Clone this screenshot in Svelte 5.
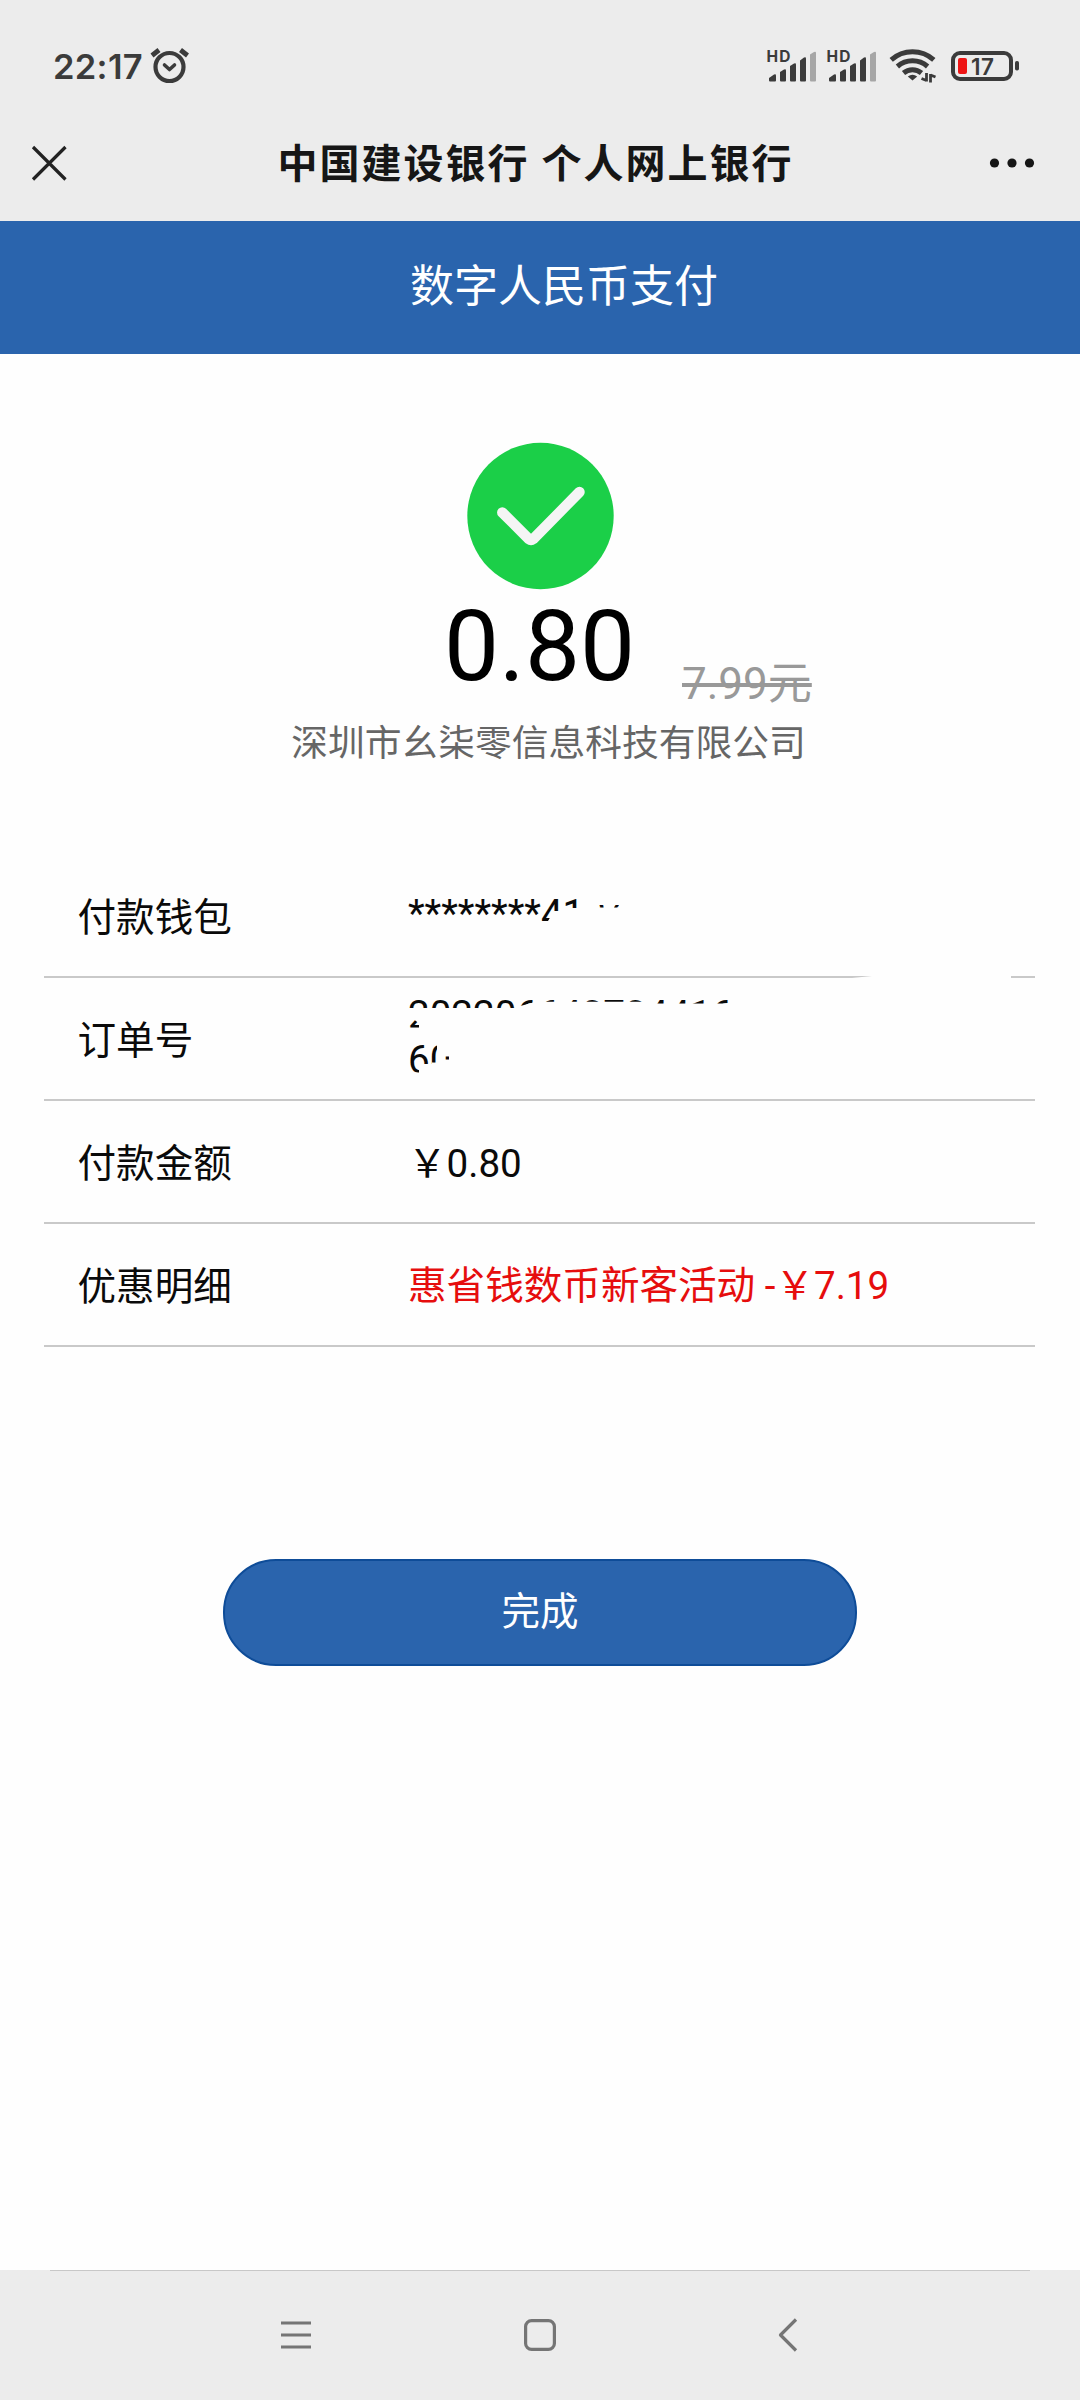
<script>
  const rows = [
    { label: '付款钱包', value: '********4104', kind: 'wallet' },
    { label: '订单号', value: '202206640704416', rest: '60', kind: 'order' },
    { label: '付款金额', value: '\uFFE50.80', kind: 'amount' },
    { label: '优惠明细', value: '惠省钱数币新客活动 -\uFFE57.19', kind: 'discount' }
  ];
</script>

{#snippet signal()}
  <svg class="signal" width="52" height="36" viewBox="0 0 52 36">
    <text x="-0.500" y="15" class="hd" textLength="24">HD</text>
    <g fill="#3b3b3b">
      <path d="M2 31 7 27.500Q9 26.500 9 28.500V33.500q0 1-1 1H3q-1 0-1-1Z" />
      <path d="M13 25 17 22.500Q19 21.500 19 23.500V33.500q0 1-1 1H14q-1 0-1-1Z" />
      <path d="M23 19 27 16.500Q29 15.500 29 17.500V33.500q0 1-1 1H24q-1 0-1-1Z" />
      <path d="M33 13.500 37 10.500Q39 9.500 39 11.500V33.500q0 1-1 1H34q-1 0-1-1Z" />
    </g>
    <path fill="#a6a6a6" d="M43 7.500 47 5Q49 4 49 6V33.500q0 1-1 1H44q-1 0-1-1Z" />
  </svg>
{/snippet}

<div class="screen">
  <div class="status">
    <span class="time">22:17</span>
    <svg class="alarm" width="40" height="38" viewBox="0 0 40 38" fill="none" stroke="#3b3b3b" stroke-width="4.200" stroke-linecap="round" stroke-linejoin="round">
      <circle cx="20.500" cy="21" r="14" />
      <path d="m15.500 19 5 4.500 5-4.500" stroke-width="3.600" />
      <path d="M3 9.500 10 4M31.500 4 38.500 9.500" stroke-linecap="butt" stroke-width="4.800" />
    </svg>
    <div class="indicators">
      {@render signal()}
      {@render signal()}
      <svg class="wifi" width="48" height="36" viewBox="0 0 48 36" fill="none" stroke="#3b3b3b" stroke-width="5">
        <path d="M2.200 12.800a32 32 0 0 1 42.600 0" />
        <path d="M8.400 19.500a23 23 0 0 1 30.200 0" />
        <path d="M14.500 26a14 14 0 0 1 18 0" />
        <path d="M23.500 33.500 18.800 29.500q4.700-3.400 9.400 0Z" fill="#3b3b3b" stroke="none" />
        <path d="M37.500 26v8.500M32.500 31.500l5 2M41.500 35.500V27M46.500 30l-5-2" stroke-width="2.800" />
      </svg>
      <svg class="battery" width="70" height="32" viewBox="0 0 70 32">
        <rect x="3" y="3" width="58" height="26" rx="7" fill="none" stroke="#3b3b3b" stroke-width="4" />
        <rect x="8" y="8" width="9" height="16" rx="2" fill="#ee1515" />
        <rect x="65" y="11" width="4" height="9.500" rx="1.800" fill="#3b3b3b" />
        <text x="21" y="25" class="level" textLength="23">17</text>
      </svg>
    </div>
  </div>

  <header class="titlebar">
    <svg width="36" height="36" viewBox="0 0 36 36" fill="none" stroke="#222" stroke-width="3.200">
      <path d="M2 2 34.500 34.500M34.500 2 2 34.500" />
    </svg>
    <h1>中国建设银行 个人网上银行</h1>
    <svg width="46" height="12" viewBox="0 0 46 12" fill="#161616">
      <circle cx="4.500" cy="6" r="4.600" /><circle cx="22" cy="6" r="4.600" /><circle cx="39.500" cy="6" r="4.600" />
    </svg>
  </header>

  <div class="banner">数字人民币支付</div>

  <main>
    <svg class="success" width="147" height="147" viewBox="0 0 147 147">
      <circle cx="73.500" cy="73" r="73.200" fill="#1bcf48" />
      <path d="M35.300 69.500 61.800 96Q64 97.600 66.300 96L112.500 49" fill="none" stroke="#f5f5f5" stroke-width="10.500" stroke-linecap="round" stroke-linejoin="round" />
    </svg>

    <div class="price">
      <span class="paid">0.80</span>
      <span class="original">7.99元</span>
    </div>
    <p class="merchant">深圳市幺柒零信息科技有限公司</p>

    <dl>
      {#each rows as row}
        <div class="row {row.kind}">
          <dt>{row.label}</dt>
          <dd>{row.value}{#if row.rest}<br />{row.rest}{/if}</dd>
        </div>
      {/each}
    </dl>

    <button>完成</button>
  </main>

  <nav>
    <svg width="32" height="34" viewBox="0 0 32 34" stroke="#757575" stroke-width="3.200">
      <path d="M1 5H31M1 17H31M1 29H31" />
    </svg>
    <svg width="34" height="34" viewBox="0 0 34 34" fill="none" stroke="#757575" stroke-width="3.200">
      <rect x="2.600" y="2.600" width="28.800" height="28.800" rx="6" />
    </svg>
    <svg width="22" height="36" viewBox="0 0 22 36" fill="none" stroke="#757575" stroke-width="3.200" stroke-linejoin="round">
      <path d="M19 2.500 3.500 18 19 33.500" />
    </svg>
  </nav>
</div>

<style>
  :global(body) {
    margin: 0;
    background: #fefefe;
  }
  .screen {
    width: 1080px;
    height: 2400px;
    display: flex;
    flex-direction: column;
    background: #fefefe;
    color: #0a0a0a;
    font-family: Roboto, 'Noto Sans CJK SC', sans-serif;
    overflow: hidden;
  }
  svg {
    display: block;
    flex: none;
    overflow: visible;
  }
  .status {
    height: 104px;
    box-sizing: border-box;
    padding: 47px 60px 0 53px;
    display: flex;
    align-items: flex-start;
    background: #ececec;
  }
  .time {
    width: 96px;
    height: 38px;
    font: 600 34.5px/39px Inter, sans-serif;
    letter-spacing: 0.3px;
    color: #3b3b3b;
  }
  .alarm {
    margin-top: -1px;
  }
  .indicators {
    margin-left: auto;
    display: flex;
  }
  .signal {
    margin-right: 8px;
  }
  .hd {
    font: 700 15.5px Inter, sans-serif;
    fill: #3b3b3b;
  }
  .wifi {
    margin-left: 2px;
  }
  .battery {
    margin: 3px 0 0 13px;
  }
  .level {
    font: 600 22.5px Inter, sans-serif;
    fill: #3b3b3b;
  }
  .titlebar {
    height: 117px;
    box-sizing: border-box;
    padding: 0 44px 0 31px;
    display: flex;
    align-items: center;
    justify-content: space-between;
    background: #ececec;
  }
  h1 {
    margin: 0;
    padding: 4px 0 0 14px;
    font-size: 40px;
    line-height: 60px;
    font-weight: 700;
    letter-spacing: 2px;
    color: #161616;
  }
  .banner {
    height: 133px;
    line-height: 133px;
    padding-left: 48px;
    text-align: center;
    font-size: 44px;
    color: #fff;
    background: #2a64ad;
  }
  main {
    flex: 1;
    display: flex;
    flex-direction: column;
    align-items: center;
  }
  .success {
    margin-top: 89px;
  }
  .price {
    width: 100%;
    height: 125px;
    padding-top: 2px;
    display: flex;
    align-items: baseline;
    line-height: 108px;
  }
  .paid {
    margin-left: 444px;
    width: 238px;
    font-size: 98px;
    color: #000;
  }
  .original {
    padding-top: 19px;
    margin-bottom: -19px;
    transform: translateY(19px);
    font-size: 44px;
    color: #999;
    text-decoration: line-through;
    text-decoration-thickness: 4px;
  }
  .merchant {
    margin: 0;
    padding: 2px 0 0 17px;
    font-size: 36.75px;
    line-height: 50px;
    color: #666;
  }
  dl {
    width: 991px;
    margin: 86px 1px 0 0;
  }
  .row {
    position: relative;
    height: 123px;
    display: flex;
    align-items: center;
    font-size: 38.6px;
  }
  .row::after {
    content: '';
    position: absolute;
    inset: auto 0 0;
    height: 2px;
    background: #c9c9c9;
  }
  .wallet::after {
    clip-path: path('M0 0H828L808 2H0ZM967 0H992V2H967Z');
  }
  dt {
    width: 364px;
    padding: 0 0 6px 33.500px;
    box-sizing: border-box;
  }
  dd {
    margin: 0;
    line-height: 45px;
    white-space: nowrap;
  }
  .wallet dd,
  .order dd {
    margin-bottom: 6px;
  }
  .amount dd {
    padding-top: 1px;
  }
  .wallet dd {
    clip-path: path('M0 0H151V20H146L140 30H0ZM156 0H170V17H156ZM191 14H196V16.500H191ZM206 14H211V16.500H206Z');
  }
  .order dd {
    clip-path: path('M0 0H107V16.500H0ZM107 0H125V11L107 16ZM125 0H237V10.300H125ZM237 0H400V12H237ZM0 31 6 28 11 32V36H0ZM0 48H24V72.500H11V81H0ZM24 50H29V71H24ZM37 65H41V68H37Z');
  }
  .discount dd {
    color: #e60d0d;
  }
  button {
    width: 634px;
    height: 107px;
    margin-top: 212px;
    padding: 0 0 10px;
    border: 2px solid #0e4c98;
    border-radius: 53px;
    background: #2a64ad;
    color: #fff;
    font: inherit;
    font-size: 38.5px;
  }
  nav {
    height: 130px;
    box-sizing: border-box;
    padding: 0 281px 0 280px;
    display: grid;
    grid-template-columns: 1fr 34px 1fr;
    align-items: center;
    background: linear-gradient(#c8c8c8, #c8c8c8) 50px 0 / 980px 1px no-repeat #ececec;
  }
  nav svg:last-child {
    justify-self: end;
  }
</style>
